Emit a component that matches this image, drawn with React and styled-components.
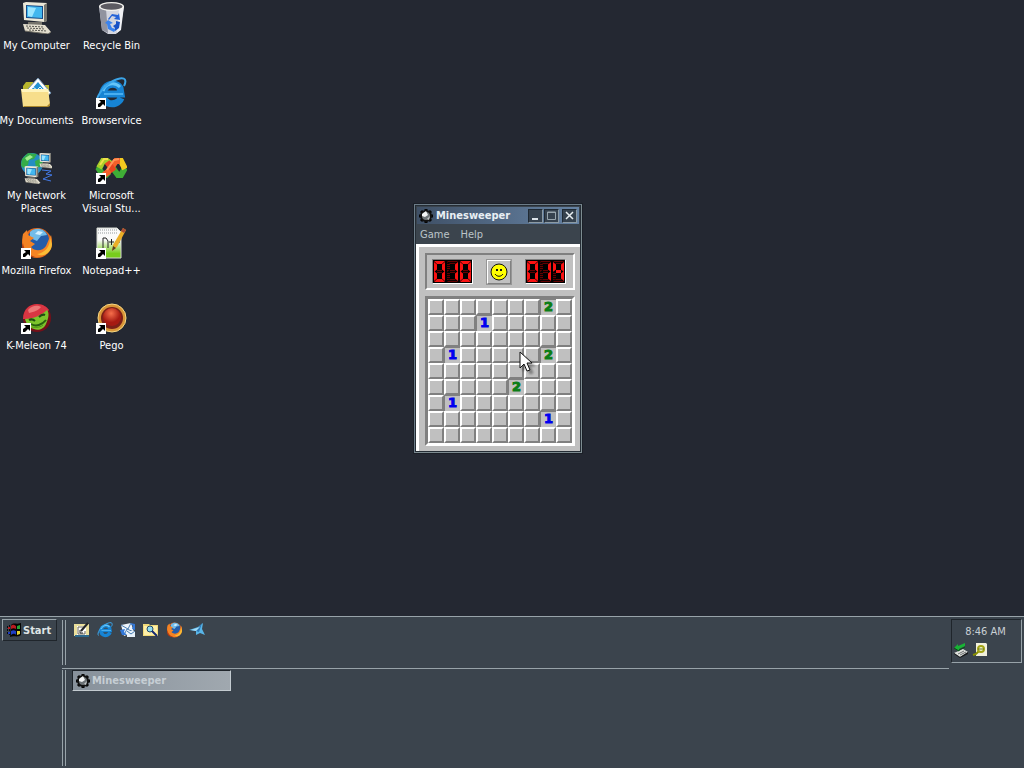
import React, { useState } from "react";
import styled, { createGlobalStyle, css } from "styled-components";

const uiFont = `"DejaVu Sans Condensed", "DejaVu Sans", sans-serif`;

const colors = {
    desktop: "#242832",
    panel: "#3b444d",
    line: "#98a3a9",
    dark: "#1f252b",
    text: "#c9d0d4",
    face: "#c0c0c0",
    shadow: "#808080",
};

const GlobalStyle = createGlobalStyle`
    * {
        box-sizing: border-box;
    }

    body {
        margin: 0;
        background: ${colors.desktop};
        font: 11px/13px ${uiFont};
        overflow: hidden;
    }

    button {
        font: inherit;
        color: inherit;
        padding: 0;
        border: 0;
        background: none;
    }

    svg {
        display: block;
        flex: none;
    }
`;

const Screen = styled.div`
    min-height: 100vh;
    display: flex;
    flex-direction: column;
`;

const Desktop = styled.main`
    position: relative;
    flex: 1;
    padding-top: 2px;
`;

const Shortcuts = styled.nav`
    display: grid;
    grid-template-rows: repeat(5, 75px);
    grid-auto-flow: column;
    grid-auto-columns: 73px;
    column-gap: 2px;
    justify-content: start;
`;

const Shortcut = styled.a`
    display: flex;
    flex-direction: column;
    align-items: center;
    gap: 5px;
    color: #fff;
    text-align: center;
    text-decoration: none;
    white-space: pre;

    svg {
        margin-right: 1px;
    }
`;

const Window = styled.section`
    position: absolute;
    left: 414px;
    top: 204px;
    background: ${colors.panel};
    border: 1px solid #6c7c88;
    border-right-color: #7d8b90;
    border-bottom-color: #7d8b90;
    box-shadow: inset 0 0 0 1px #252d35, 0 0 0 1px #1b1f27;
    padding: 2px 1px 1px;
`;

const TitleBar = styled.header`
    display: flex;
    align-items: center;
    height: 17px;
    margin: 0 1px;
    padding: 0 2px 0 1px;
    background: linear-gradient(90deg, #3f5066, #6683a4);
    color: #e8eff4;
`;

const Title = styled.h1`
    flex: 1;
    margin: 0 0 0 2px;
    font-size: 11px;
    line-height: 13px;
`;

const TitleButton = styled.button`
    display: grid;
    place-items: center;
    width: 15px;
    height: 14px;
    margin-left: ${({ $gap }) => ($gap ? 3 : 1)}px;
    background: #36424e;
    border: 1px solid #1f2933;
    border-right-color: #8c9ba5;
    border-bottom-color: #8c9ba5;
`;

const MenuBar = styled.nav`
    display: flex;
    align-items: flex-start;
    height: 20px;
    padding: 4px 4px 0;
    gap: 11px;
    color: #bcc4c9;
`;

const Client = styled.div`
    background: ${colors.face};
    border: solid #fff;
    border-width: 3px 0 0 3px;
    padding: 6px 5px 5px 6px;
`;

const sunken = css`
    border-style: solid;
    border-color: ${colors.shadow} #fff #fff ${colors.shadow};
`;

const ScorePanel = styled.div`
    ${sunken}
    border-width: 2px;
    display: flex;
    align-items: center;
    justify-content: space-between;
    height: 37px;
    margin-bottom: 6px;
    padding: 0 7px 0 5px;
`;

const Counter = styled.output`
    display: flex;
    width: 41px;
    height: 25px;
    background: #000;
    border: 1px solid;
    border-color: ${colors.shadow} #fff #fff ${colors.shadow};
`;

const Digit = styled.span`
    display: grid;
    grid-template-columns: 3px 5px 3px;
    grid-template-rows: 3px 6px 3px 6px 3px;
    width: 13px;
    padding: 1px;
`;

const segmentClip = {
    top: "polygon(0 0, 100% 0, 73% 100%, 27% 100%)",
    bottom: "polygon(27% 0, 73% 0, 100% 100%, 0 100%)",
    left: "polygon(0 0, 100% 25%, 100% 75%, 0 100%)",
    right: "polygon(100% 0, 0 25%, 0 75%, 100% 100%)",
};

const Segment = styled.span`
    grid-area: ${({ $area }) => $area};
    background: ${({ $on }) =>
        $on ? "#fa1212" : "repeating-linear-gradient(#640000 0 1px, #0c0000 1px 2px)"};
    margin: ${({ $side }) => ($side === "left" || $side === "right" ? "-2px 0" : "0")};
    clip-path: ${({ $side }) => segmentClip[$side] || "none"};
`;

const FaceButton = styled.button`
    display: grid;
    place-items: center;
    width: 26px;
    height: 26px;
    background: ${colors.face};
    border: 2px solid;
    border-color: #fff ${colors.shadow} ${colors.shadow} #fff;
    outline: 1px solid #969696;
    outline-offset: -1px;
`;

const Board = styled.div`
    ${sunken}
    border-width: 3px;
    display: grid;
    grid-template-columns: repeat(9, 16px);
    grid-auto-rows: 16px;
`;

const numberColors = { 1: "#0000f0", 2: "#0b7d16" };

const Cell = styled.button`
    background: ${colors.face};
    border: 2px solid;
    border-color: #fff ${colors.shadow} ${colors.shadow} #fff;

    ${({ $value }) =>
        $value &&
        css`
            border-width: 1px 0 0 1px;
            border-color: ${colors.shadow};
            color: ${numberColors[$value]};
            font: 900 13px/13px "DejaVu Sans", sans-serif;
            -webkit-text-stroke: 1px;
            padding-bottom: 2px;
        `}
`;

const Pointer = styled.svg`
    position: absolute;
    left: 519px;
    top: 351px;
    filter: drop-shadow(3px 3px 1px rgba(0, 0, 0, 0.35));
    pointer-events: none;
`;

const Taskbar = styled.footer`
    display: flex;
    height: 152px;
    background: ${colors.panel};
    border-top: 1px solid ${colors.line};
    color: ${colors.text};
`;

const StartArea = styled.div`
    width: 62px;
    padding: 2px;
`;

const StartButton = styled.button`
    display: flex;
    align-items: center;
    gap: 1px;
    width: 55px;
    height: 22px;
    padding-left: 3px;
    border: 1px solid;
    border-color: ${colors.line} ${colors.dark} ${colors.dark} ${colors.line};
    color: #dfe4e6;
    font-weight: bold;
`;

const Bands = styled.div`
    flex: 1;
    display: flex;
    flex-direction: column;
`;

const Band = styled.div`
    display: flex;
    align-items: flex-start;
    padding-top: 3px;
    ${({ $ruled }) =>
        $ruled
            ? `height: 52px; padding-bottom: 3px; border-bottom: 1px solid ${colors.line};`
            : "flex: 1; padding-top: 1px; padding-bottom: 2px;"}
`;

const Gripper = styled.span`
    align-self: stretch;
    width: 4px;
    border: solid ${colors.line};
    border-width: 0 1px;
`;

const QuickLaunch = styled.nav`
    display: flex;
    gap: 7px;
    padding: 2px 8px;
`;

const TaskButton = styled.button`
    display: flex;
    align-items: center;
    gap: 1px;
    width: 159px;
    height: 21px;
    margin-left: 6px;
    padding-left: 2px;
    background: linear-gradient(90deg, #87919b, #a0a8af);
    border: 1px solid ${colors.dark};
    border-right-color: #c3cbd0;
    border-bottom-color: #c3cbd0;
    color: #c6ced4;
    font-weight: bold;
`;

const Tray = styled.aside`
    width: 71px;
    height: 44px;
    margin: 2px 2px 0;
    border: 1px solid;
    border-color: ${colors.dark} ${colors.line} ${colors.line} ${colors.dark};
`;

const Clock = styled.time`
    display: block;
    padding: 5px 2px 0 0;
    text-align: center;
`;

const TrayIcons = styled.div`
    display: flex;
    gap: 3px;
    padding: 4px 1px;
`;

function ShortcutArrow() {
    return (
        <g>
            <path d="M1 21h10v11H1z" fill="#fff" />
            <path d="M4 23h6v6l-2-2-3 3H3v-3l3-2z" fill="#000" />
        </g>
    );
}

function Icon({ size = 32, shortcut, box = 32, children }) {
    return (
        <svg width={size} height={size} viewBox={`0 0 ${box} ${box}`} aria-hidden="true">
            {children}
            {shortcut && <ShortcutArrow />}
        </svg>
    );
}

function MonitorShape() {
    return (
        <g>
            <path d="M3 1l3-1 21 1v18l-3 1-20-2z" fill="#ece8d8" />
            <path d="M24 3l3-2v18l-3 1z" fill="#77766e" />
            <path d="M6 3l17 1v13L6 16z" fill="#164a86" />
            <path d="M7 4l15 1v11L7 15z" fill="#42b7ef" />
            <path d="M8 5l8 1-4 9-4-1z" fill="#9be5ff" />
            <path d="M8 20h14v3H8z" fill="#75736b" />
            <path d="M3 22l22 1 6 7-3 2-23-3z" fill="#e4dfcf" />
            <path d="M6 24l17 1M7 26l18 1M9 28l18 1" stroke="#57564f" strokeDasharray="2 1" />
            <path d="M5 29l23 3 3-2" fill="none" stroke="#6d6b62" />
        </g>
    );
}

function ComputerIcon() {
    return (
        <Icon>
            <MonitorShape />
        </Icon>
    );
}

function BinIcon() {
    return (
        <Icon>
            <path d="M4 4l3 24 6 4h8l4-4 4-24z" fill="#d4d6df" />
            <path d="M4 4l3 24 6 3-2-24z" fill="#91939f" />
            <path d="M24 7l5-3-3 24-4 3z" fill="#f0f1f5" />
            <ellipse cx="16.500" cy="4.500" rx="12.500" ry="4.500" fill="#f3f2ee" />
            <ellipse cx="16.500" cy="4.500" rx="11" ry="3.300" fill="#5c5b62" />
            <path d="M13 17l4-5 6 1 1-2 1 7-6-1 2-2-4-1-3 4z" fill="#2463d8" />
            <path d="M13 18l5 3-3 1 2 4 4 1-2 3-6-3-1-5-2-1z" fill="#3a83ee" />
            <path d="M21 19l4 1-1 6-4 3v-3l-2-2 3-2z" fill="#1852c5" />
        </Icon>
    );
}

function DocumentsIcon() {
    return (
        <Icon>
            <path d="M3 9l3-4h7l2 3h14v19H3z" fill="#b9b62d" />
            <path d="M7 13L18 1l13 15-7 5z" fill="#fff" stroke="#7291af" />
            <path d="M11 13l7-8 9 11z" fill="#2391d1" />
            <path d="M13 10l4 3 3-3 5 5" stroke="#d8f4ff" fill="none" />
            <path d="M1 12h27l2 15-3 3H3z" fill="#f7de8b" />
            <path d="M1 12h27l1 3H2z" fill="#fff4bc" />
            <path d="M3 29h24l3-3v3l-2 1H4z" fill="#aa872c" />
        </Icon>
    );
}

function ExplorerShape() {
    return (
        <g>
            <path
                d="M26 21c-2 5-8 7-13 5-6-3-7-10-3-15s12-5 15 0l1 6H11"
                fill="none"
                stroke="#1684d4"
                strokeWidth="7"
            />
            <path d="M8 14c2-7 11-10 17-4" fill="none" stroke="#64c4f8" strokeWidth="3" />
            <path d="M9 17h19" stroke="#48aef0" strokeWidth="2" />
            <path
                d="M3 27C-1 22 8 9 18 4s15-3 11 5"
                fill="none"
                stroke="#3ba5e9"
                strokeWidth="2"
            />
        </g>
    );
}

function NetworkIcon() {
    return (
        <Icon>
            <circle cx="12" cy="12" r="11" fill="#248dc2" />
            <path d="M2 7l6-6 9 1-3 5-5 1-1 5-5 3-2-3zM15 9l7-3 1 8-7 2z" fill="#35ac49" />
            <path d="M5 6l5-3 3 2-6 4z" fill="#a1ed8b" />
            <g transform="translate(18 1) scale(.48)">
                <MonitorShape />
            </g>
            <g transform="translate(3 14) scale(.56)">
                <MonitorShape />
            </g>
            <path d="M22 18l9 1-5 3 6 1-9 4 8 2" fill="none" stroke="#4379e5" />
        </Icon>
    );
}

// two interlocked rings, the orange strand crosses on top
function StudioIcon() {
    return (
        <Icon shortcut>
            <g fill="none" strokeWidth="6">
                <path d="M14 20l-3 3H8l-4-6 2-4" stroke="#3fae36" />
                <path d="M4 16l4-7h4l4 3" stroke="#a9cf2a" />
                <path d="M15 12l5 7 3 4h3l4-7" stroke="#3fae36" />
                <path d="M30 17l-4-8h-3" stroke="#f4cb1f" />
                <path d="M25 9h-4l-8 11-4 3" stroke="#f4602a" />
                <path d="M12 10l7 9" stroke="#e9461f" />
            </g>
            <path d="M24 7l-5 1-7 10" fill="none" stroke="#ff9457" strokeWidth="2" />
            <path d="M5 13l4-6h4" fill="none" stroke="#f0e04a" strokeWidth="2" />
        </Icon>
    );
}

function FirefoxShape() {
    return (
        <g>
            <circle cx="17" cy="16" r="15" fill="#e4681b" />
            <circle cx="18" cy="13" r="11" fill="#245ca8" />
            <path d="M10 5c6-6 15-3 17 3l-6 1-4 5-7-3z" fill="#72bce9" />
            <path d="M18 4l5 1-3 3-5-1z" fill="#d4efff" />
            <path
                d="M3 7l4-4 1 5 6 3-4 3 5 3-4 3c4 5 12 4 15-1l3-7 2-4c3 11-3 21-13 22C7 31 0 20 3 7z"
                fill="#f48324"
            />
            <path d="M30 11c0 9-5 15-13 16 7 4 15-2 15-10z" fill="#f9bd36" />
            <path d="M3 16c1 8 6 12 12 14C6 31 0 24 3 16z" fill="#b73c12" />
        </g>
    );
}

function NotepadIcon() {
    return (
        <Icon shortcut>
            <defs>
                <linearGradient id="sheet" x1="0" y1="0" x2="0" y2="1">
                    <stop offset="0.4" stopColor="#fafafa" />
                    <stop offset="0.85" stopColor="#78cc1c" />
                </linearGradient>
            </defs>
            <path d="M2 1h20l4 4v26H2z" fill="url(#sheet)" stroke="#d5d8d1" />
            <path d="M3 3h19M3 6h20" stroke="#93999b" strokeDasharray="1 1" />
            <path
                d="M8 21V11h3l2 3v7M14 15h5M16.500 12v6M20 15h5M22.500 12v6"
                fill="none"
                stroke="#222"
            />
            <path d="M28 1l3 2-9 17-5 4 1-6z" fill="#ebae27" />
            <path d="M28 1l3 2-2 3-3-2z" fill="#ad4c37" />
            <path d="M18 19l3 2-4 3z" fill="#574524" />
        </Icon>
    );
}

function MeleonIcon() {
    return (
        <Icon shortcut>
            <circle cx="17" cy="16" r="14" fill="#741019" />
            <path d="M3 17C3 7 10 2 17 2c6 0 10 3 12 6-4 4-11 8-20 9z" fill="#d93643" />
            <path d="M8 8c4-5 10-5 13-3-2 3-7 5-12 6z" fill="#f08a85" opacity=".8" />
            <path d="M5 17c8 0 17-4 22-9 3 3 1 10-1 14-2 5-8 7-12 5-4-1-8-5-9-10z" fill="#7cc42c" />
            <path d="M9 18c2-1 4-1 6 1M19 15c2-2 4-3 6-2" fill="none" stroke="#1f4d10" strokeWidth="2" />
            <path d="M11 22c5 3 11 1 15-4" fill="none" stroke="#27600f" strokeWidth="2" />
            <path d="M12 25c5 1 9 0 11-2" fill="none" stroke="#4f9518" />
        </Icon>
    );
}

function PegoIcon() {
    return (
        <Icon shortcut>
            <defs>
                <radialGradient id="peg" cx=".45" cy=".3">
                    <stop stopColor="#f66f4b" />
                    <stop offset="1" stopColor="#a61a12" />
                </radialGradient>
            </defs>
            <circle cx="17" cy="16" r="14" fill="#d99537" stroke="#f6d883" />
            <circle cx="17" cy="16" r="11" fill="#7b2018" />
            <circle cx="17" cy="15" r="9" fill="url(#peg)" />
        </Icon>
    );
}

function MineIcon() {
    return (
        <Icon size={16} box={16}>
            <path
                d="M8 1v14M1 8h14M3 3l10 10M13 3L3 13"
                stroke="#050505"
                strokeWidth="3"
            />
            <circle cx="8" cy="8" r="6" fill="#111" />
            <circle cx="8" cy="8" r="4" fill="#6d7376" />
            <path d="M4 6l4-3 2 4-3 2-3-1z" fill="#f3f5f5" />
            <path d="M9 11l3-3-1 4z" fill="#c3c7c8" />
        </Icon>
    );
}

function WindowsFlag() {
    return (
        <Icon size={16} box={16}>
            <path d="M1 4h1v2H1zM1 7h1v2H1zM1 10h1v2H1zM3 3h1v2H3zM3 7h1v2H3zM3 11h1v2H3z" fill="#080a10" />
            <path d="M5 3c3-3 5 0 10-2v12c-4 3-7 0-11 2z" fill="#050505" />
            <path d="M2 5h2v2H2zM5 4c2-2 3-1 5 0v3C8 6 7 6 5 7z" fill="#b81c20" />
            <path d="M11 4l3-1v4h-3z" fill="#28a337" />
            <path d="M2 10h2v2H2zM5 9c2-1 3-1 5 0v4c-2-2-3-1-5 0z" fill="#1e3ec3" />
            <path d="M11 9h3v3l-3 1z" fill="#e3d531" />
        </Icon>
    );
}

function ShowDesktopIcon() {
    return (
        <Icon size={16} box={16}>
            <path d="M0 2h15v12H0z" fill="#eadf9c" />
            <path d="M1 13h14v2H1z" fill="#2c688c" />
            <path d="M3 4h9v9H3z" fill="#fff" />
            <path d="M4 5h6M4 5v7h7V9" fill="none" stroke="#6c6858" />
            <path d="M7 9l7-8" fill="none" stroke="#242628" strokeWidth="2" />
            <path d="M6 8v3h3" fill="none" stroke="#242628" />
        </Icon>
    );
}

function MailIcon() {
    return (
        <Icon size={16} box={16}>
            <path d="M1 3l10-2 3 9-10 4z" fill="#eef5fb" />
            <path d="M1 3l7 4 3-6M4 13l3-6 7 3" fill="none" stroke="#477cb1" />
            <path d="M0 8l5-1-1 3 3 3H2zM10 1l5 1v6l-3-1 1-3z" fill="#3278d8" />
            <path d="M7 9h8v6H7z" fill="#e6f1fa" />
            <path d="M7 9l4 3 4-3" fill="none" stroke="#477cb1" />
        </Icon>
    );
}

function SearchIcon() {
    return (
        <Icon size={16} box={16}>
            <path d="M0 2h6l1 1h8v11H0z" fill="#f2db79" />
            <path d="M1 4h13v9H1z" fill="#fff0a8" />
            <circle cx="7" cy="7" r="3" fill="#91dcef" stroke="#254b66" />
            <path d="M9 9l5 5" stroke="#172a71" strokeWidth="2" />
        </Icon>
    );
}

function PlaneIcon() {
    return (
        <Icon size={16} box={16}>
            <path d="M0 8l9-3 5-4-1 6 3 6-5-2-4 2V9z" fill="#58b5e8" />
            <path d="M7 9l6-8-3 9z" fill="#2b77b4" />
            <path d="M2 8l9-3-4 4z" fill="#a5ddf8" />
        </Icon>
    );
}

function EjectIcon() {
    return (
        <Icon size={16} box={16}>
            <path d="M1 11l9-4 5 3-8 5z" fill="#dfe1dd" />
            <path d="M1 11l6 4v1l-6-4zM7 15l8-5v2l-8 4z" fill="#191b1c" />
            <path d="M5 12l6-3M7 13l6-3" stroke="#6b6f70" />
            <path d="M1 6l4-4v2l7-3v3L6 7v2z" fill="#18b335" />
            <path d="M1 6l5 3v-1l6-3" fill="none" stroke="#0a4d19" />
        </Icon>
    );
}

function ScannerIcon() {
    return (
        <Icon size={16} box={16}>
            <path d="M4 1h10l1 1v12H4z" fill="#f2f1dd" />
            <path d="M7 9l-3 3-3 1" fill="none" stroke="#899100" strokeWidth="2" />
            <circle cx="9" cy="7" r="3" fill="#edf7d0" stroke="#a3a414" strokeWidth="2" />
            <path d="M6 7h6" stroke="#6d7416" />
        </Icon>
    );
}

function Smiley() {
    return (
        <Icon size={18} box={18}>
            <circle cx="9" cy="9" r="8" fill="#ffff00" stroke="#111" />
            <path d="M6 6h2v2H6zM10 6h2v2h-2z" fill="#111" />
            <path d="M5 11c2 3 6 3 8 0" fill="none" stroke="#111" />
        </Icon>
    );
}

const shortcuts = [
    { label: "My Computer", icon: <ComputerIcon /> },
    { label: "My Documents", icon: <DocumentsIcon /> },
    { label: "My Network\nPlaces", icon: <NetworkIcon /> },
    { label: "Mozilla Firefox", icon: <Icon shortcut><FirefoxShape /></Icon> },
    { label: "K-Meleon 74", icon: <MeleonIcon /> },
    { label: "Recycle Bin", icon: <BinIcon /> },
    { label: "Browservice", icon: <Icon shortcut><ExplorerShape /></Icon> },
    { label: "Microsoft\nVisual Stu...", icon: <StudioIcon /> },
    { label: "Notepad++", icon: <NotepadIcon /> },
    { label: "Pego", icon: <PegoIcon /> },
];

const quickLinks = [
    { label: "Show Desktop", icon: <ShowDesktopIcon /> },
    { label: "Browser", icon: <Icon size={16}><ExplorerShape /></Icon> },
    { label: "Mail", icon: <MailIcon /> },
    { label: "Search", icon: <SearchIcon /> },
    { label: "Mozilla Firefox", icon: <Icon size={16}><FirefoxShape /></Icon> },
    { label: "Messenger", icon: <PlaneIcon /> },
];

// row, column -> number
const startBoard = {
    "0,7": 2,
    "1,3": 1,
    "3,1": 1,
    "3,7": 2,
    "5,5": 2,
    "6,1": 1,
    "7,7": 1,
};

const segments = [
    { area: "1 / 1 / 2 / 4", digits: "02356789", side: "top" },
    { area: "2 / 1 / 3 / 2", digits: "045689", side: "left" },
    { area: "2 / 3 / 3 / 4", digits: "01234789", side: "right" },
    { area: "3 / 2 / 4 / 3", digits: "2345689", side: "middle" },
    { area: "4 / 1 / 5 / 2", digits: "0268", side: "left" },
    { area: "4 / 3 / 5 / 4", digits: "013456789", side: "right" },
    { area: "5 / 1 / 6 / 4", digits: "0235689", side: "bottom" },
];

function LedCounter({ label, value }) {
    const digits = String(value).padStart(3, "0");
    return (
        <Counter role="img" aria-label={`${label}: ${digits}`}>
            {digits.split("").map((digit, i) => (
                <Digit key={i}>
                    {segments.map(({ area, side, digits: lit }) => (
                        <Segment
                            key={area}
                            $area={area}
                            $side={side}
                            $on={lit.includes(digit)}
                        />
                    ))}
                </Digit>
            ))}
        </Counter>
    );
}

function Minesweeper() {
    const [board, setBoard] = useState(startBoard);

    const cells = [];
    for (let row = 0; row < 9; row++) {
        for (let col = 0; col < 9; col++) {
            const value = board[`${row},${col}`];
            cells.push(
                <Cell key={`${row},${col}`} $value={value} aria-label={value ? undefined : "Covered"}>
                    {value}
                </Cell>
            );
        }
    }

    return (
        <Window>
            <TitleBar>
                <MineIcon />
                <Title>Minesweeper</Title>
                <TitleButton aria-label="Minimize">
                    <svg width="9" height="9" viewBox="0 0 9 9">
                        <path d="M1 7h6v2H1z" fill="#dbe3e8" />
                    </svg>
                </TitleButton>
                <TitleButton aria-label="Maximize">
                    <svg width="9" height="9" viewBox="0 0 9 9">
                        <path d="M0.5 1v7.500h8V1zM0 1.500h9" fill="none" stroke="#98a5ad" />
                    </svg>
                </TitleButton>
                <TitleButton $gap aria-label="Close">
                    <svg width="9" height="9" viewBox="0 0 9 9">
                        <path d="M1 1l7 7M8 1L1 8" stroke="#e8eef2" strokeWidth="1.500" />
                    </svg>
                </TitleButton>
            </TitleBar>
            <MenuBar>
                <button>Game</button>
                <button>Help</button>
            </MenuBar>
            <Client>
                <ScorePanel>
                    <LedCounter label="Mines left" value={10} />
                    <FaceButton aria-label="New game" onClick={() => setBoard({})}>
                        <Smiley />
                    </FaceButton>
                    <LedCounter label="Time" value={14} />
                </ScorePanel>
                <Board>{cells}</Board>
            </Client>
        </Window>
    );
}

export default function App() {
    return (
        <Screen>
            <GlobalStyle />
            <Desktop>
                <Shortcuts>
                    {shortcuts.map(({ label, icon }) => (
                        <Shortcut key={label} href="#">
                            {icon}
                            {label}
                        </Shortcut>
                    ))}
                </Shortcuts>
                <Minesweeper />
                <Pointer width="14" height="22" viewBox="0 0 14 22" aria-hidden="true">
                    <path
                        d="M1 1v16l4-4 3 7 3-1-3-7h5z"
                        fill="#fff"
                        stroke="#111"
                    />
                </Pointer>
            </Desktop>
            <Taskbar>
                <StartArea>
                    <StartButton>
                        <WindowsFlag />
                        Start
                    </StartButton>
                </StartArea>
                <Bands>
                    <Band $ruled>
                        <Gripper />
                        <QuickLaunch>
                            {quickLinks.map(({ label, icon }) => (
                                <a key={label} href="#" aria-label={label}>
                                    {icon}
                                </a>
                            ))}
                        </QuickLaunch>
                    </Band>
                    <Band>
                        <Gripper />
                        <TaskButton>
                            <MineIcon />
                            Minesweeper
                        </TaskButton>
                    </Band>
                </Bands>
                <Tray>
                    <Clock>8:46 AM</Clock>
                    <TrayIcons>
                        <EjectIcon />
                        <ScannerIcon />
                    </TrayIcons>
                </Tray>
            </Taskbar>
        </Screen>
    );
}
